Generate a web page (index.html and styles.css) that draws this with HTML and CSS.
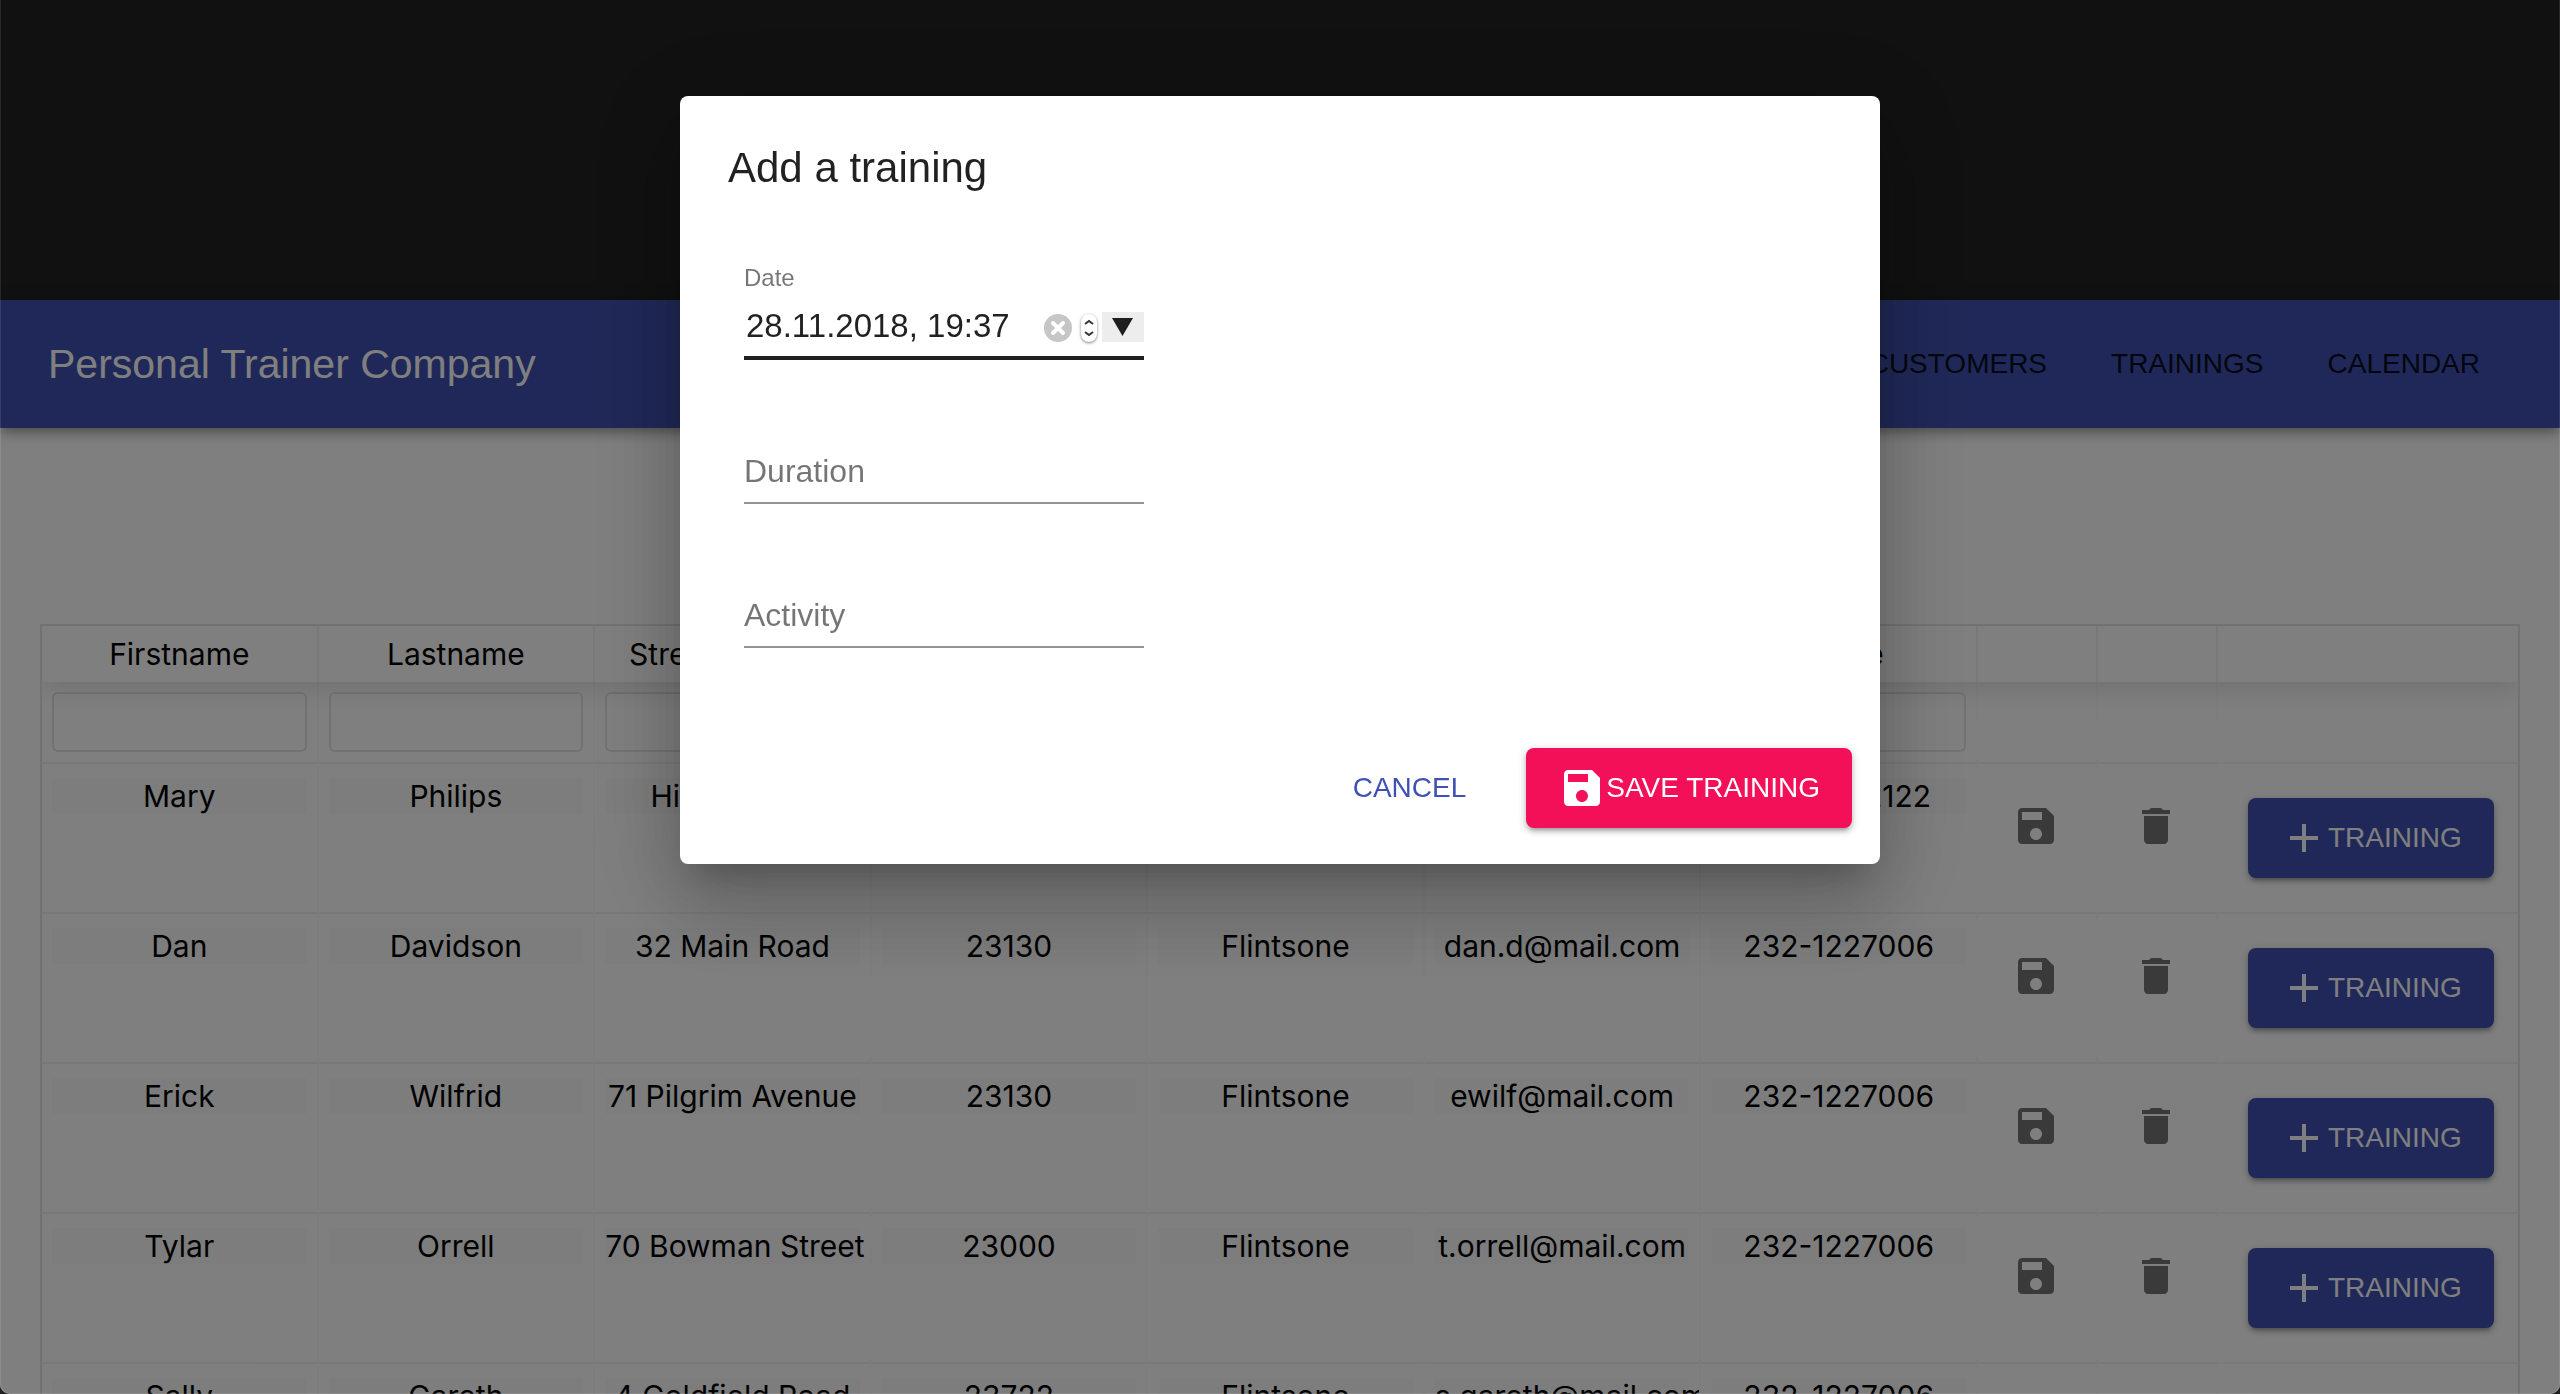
FILE: index.html
```html
<!DOCTYPE html>
<html lang="en">
<head>
<meta charset="utf-8">
<title>Personal Trainer Company</title>
<link rel="stylesheet" href="styles.css">
</head>
<body>
<svg class="sprite" aria-hidden="true">
  <symbol id="save" viewBox="0 0 24 24"><path d="M17 3H5c-1.110 0-2 .9-2 2v14c0 1.100.890 2 2 2h14c1.100 0 2-.9 2-2V7l-4-4zm-5 16c-1.660 0-3-1.340-3-3s1.340-3 3-3 3 1.340 3 3-1.340 3-3 3zm3-10H5V5h10v4z"/></symbol>
  <symbol id="delete" viewBox="0 0 24 24"><path d="M6 19c0 1.100.9 2 2 2h8c1.100 0 2-.9 2-2V7H6v12zM19 4h-3.500l-1-1h-5l-1 1H5v2h14V4z"/></symbol>
  <symbol id="add" viewBox="0 0 24 24"><path d="M19 13h-6v6h-2v-6H5v-2h6V5h2v6h6v2z"/></symbol>
</svg>
<div class="page">
  <div class="banner"></div>
  <header class="appbar">
    <h1 class="brand">Personal Trainer Company</h1>
    <nav class="nav">
      <a class="nav-link" href="#customers">CUSTOMERS</a>
      <a class="nav-link" href="#trainings">TRAININGS</a>
      <a class="nav-link" href="#calendar">CALENDAR</a>
    </nav>
  </header>
  <main class="content">
    <table class="grid">
      <colgroup><col span="7"><col class="col-icon"><col class="col-icon"><col class="col-action"></colgroup>
      <thead>
        <tr class="heads"><th>Firstname</th><th>Lastname</th><th>Street address</th><th>Postcode</th><th>City</th><th>Email</th><th>Phone</th><th></th><th></th><th></th></tr>
      </thead>
      <tbody>
        <tr class="filters">
          <td><input class="filter" type="text" aria-label="Filter firstname"></td>
          <td><input class="filter" type="text" aria-label="Filter lastname"></td>
          <td><input class="filter" type="text" aria-label="Filter street address"></td>
          <td><input class="filter" type="text" aria-label="Filter postcode"></td>
          <td><input class="filter" type="text" aria-label="Filter city"></td>
          <td><input class="filter" type="text" aria-label="Filter email"></td>
          <td><input class="filter" type="text" aria-label="Filter phone"></td>
          <td></td><td></td><td></td>
        </tr>
        <tr class="row">
          <td><div class="cell">Mary</div></td><td><div class="cell">Philips</div></td><td><div class="cell">Hill Street 2</div></td><td><div class="cell">23130</div></td><td><div class="cell">Flintsone</div></td><td><div class="cell">mary@mail.com</div></td><td><div class="cell">232-1222122</div></td>
          <td><button class="icon-button" type="button" aria-label="Save"><svg class="icon"><use href="#save"/></svg></button></td>
          <td><button class="icon-button" type="button" aria-label="Delete"><svg class="icon"><use href="#delete"/></svg></button></td>
          <td><button class="button button-primary" type="button"><svg class="icon"><use href="#add"/></svg>TRAINING</button></td>
        </tr>
        <tr class="row">
          <td><div class="cell">Dan</div></td><td><div class="cell">Davidson</div></td><td><div class="cell">32 Main Road</div></td><td><div class="cell">23130</div></td><td><div class="cell">Flintsone</div></td><td><div class="cell">dan.d@mail.com</div></td><td><div class="cell">232-1227006</div></td>
          <td><button class="icon-button" type="button" aria-label="Save"><svg class="icon"><use href="#save"/></svg></button></td>
          <td><button class="icon-button" type="button" aria-label="Delete"><svg class="icon"><use href="#delete"/></svg></button></td>
          <td><button class="button button-primary" type="button"><svg class="icon"><use href="#add"/></svg>TRAINING</button></td>
        </tr>
        <tr class="row">
          <td><div class="cell">Erick</div></td><td><div class="cell">Wilfrid</div></td><td><div class="cell">71 Pilgrim Avenue</div></td><td><div class="cell">23130</div></td><td><div class="cell">Flintsone</div></td><td><div class="cell">ewilf@mail.com</div></td><td><div class="cell">232-1227006</div></td>
          <td><button class="icon-button" type="button" aria-label="Save"><svg class="icon"><use href="#save"/></svg></button></td>
          <td><button class="icon-button" type="button" aria-label="Delete"><svg class="icon"><use href="#delete"/></svg></button></td>
          <td><button class="button button-primary" type="button"><svg class="icon"><use href="#add"/></svg>TRAINING</button></td>
        </tr>
        <tr class="row">
          <td><div class="cell">Tylar</div></td><td><div class="cell">Orrell</div></td><td><div class="cell">70 Bowman Street</div></td><td><div class="cell">23000</div></td><td><div class="cell">Flintsone</div></td><td><div class="cell">t.orrell@mail.com</div></td><td><div class="cell">232-1227006</div></td>
          <td><button class="icon-button" type="button" aria-label="Save"><svg class="icon"><use href="#save"/></svg></button></td>
          <td><button class="icon-button" type="button" aria-label="Delete"><svg class="icon"><use href="#delete"/></svg></button></td>
          <td><button class="button button-primary" type="button"><svg class="icon"><use href="#add"/></svg>TRAINING</button></td>
        </tr>
        <tr class="row">
          <td><div class="cell">Sally</div></td><td><div class="cell">Gareth</div></td><td><div class="cell">4 Goldfield Road</div></td><td><div class="cell">23722</div></td><td><div class="cell">Flintsone</div></td><td><div class="cell">s.gareth@mail.com</div></td><td><div class="cell">232-1227006</div></td>
          <td><button class="icon-button" type="button" aria-label="Save"><svg class="icon"><use href="#save"/></svg></button></td>
          <td><button class="icon-button" type="button" aria-label="Delete"><svg class="icon"><use href="#delete"/></svg></button></td>
          <td><button class="button button-primary" type="button"><svg class="icon"><use href="#add"/></svg>TRAINING</button></td>
        </tr>
      </tbody>
    </table>
  </main>
</div>
<div class="backdrop">
  <form class="dialog" role="dialog" aria-labelledby="dialog-title">
    <h2 class="dialog-title" id="dialog-title">Add a training</h2>
    <div class="fields">
      <div class="field field-active">
        <label class="label" for="date">Date</label>
        <div class="control">
          <input class="input" id="date" type="text" value="28.11.2018, 19:37">
          <button class="clear" type="button" aria-label="Clear"><svg class="glyph" viewBox="0 0 28 28"><circle cx="14" cy="14" r="14" fill="#c6c6c6"/><path d="M9 9l10 10M19 9L9 19" stroke="#fff" stroke-width="4" stroke-linecap="round"/></svg></button>
          <button class="stepper" type="button" aria-label="Step"><svg class="glyph" viewBox="0 0 16 28" fill="none" stroke="#333" stroke-width="2"><path d="M4 10l4-3 4 3M4 18l4 3 4-3"/></svg></button>
          <button class="picker" type="button" aria-label="Open calendar"><svg class="glyph" viewBox="0 0 42 30"><path d="M10 6h21L20.500 24z" fill="#1f1f1f"/></svg></button>
        </div>
      </div>
      <div class="field">
        <input class="input control" type="text" placeholder="Duration" aria-label="Duration">
      </div>
      <div class="field">
        <input class="input control" type="text" placeholder="Activity" aria-label="Activity">
      </div>
    </div>
    <div class="actions">
      <button class="button button-text" type="button">CANCEL</button>
      <button class="button button-secondary" type="submit"><svg class="icon"><use href="#save"/></svg>SAVE TRAINING</button>
    </div>
  </form>
</div>
</body>
</html>
```

FILE: styles.css
```css
* { box-sizing: border-box; }

html, body { height: 100%; }

body {
  margin: 0;
  overflow: hidden;
  background: #222;
  color: #000;
  font: 30px/36px Inter, "Liberation Sans", sans-serif;
}

h1, h2 { margin: 0; font-weight: 400; }

button, input { font: inherit; color: inherit; }
button { border: 0; padding: 0; background: none; cursor: pointer; }

.sprite { display: none; }

.page {
  height: 100%;
  overflow: hidden;
  border-radius: 0 0 10px 10px;
  background: #fff;
}

.banner { height: 300px; background: #222; }

.appbar {
  display: flex;
  align-items: center;
  justify-content: space-between;
  height: 128px;
  padding: 0 48px;
  background: #3f51b0;
  box-shadow: 0 4px 8px -2px rgba(0, 0, 0, .2), 0 8px 10px rgba(0, 0, 0, .14), 0 2px 20px rgba(0, 0, 0, .12);
  font-family: "Liberation Sans", sans-serif;
}

.brand { color: #fff; font-size: 41px; line-height: 48px; }

.nav { display: flex; }

.nav-link {
  padding: 0 32px;
  color: rgba(0, 0, 0, .87);
  font-size: 28px;
  text-decoration: none;
}

.content { padding: 196px 40px 0; }

/* Customer table */
.grid {
  width: 100%;
  border: 2px solid rgba(0, 0, 0, .1);
  border-spacing: 0;
  table-layout: fixed;
  text-align: center;
}

.col-icon { width: 120px; }
.col-action { width: 300px; }

/* The header shadow falls only downwards, inside the table frame */
.grid thead {
  box-shadow: 0 4px 30px rgba(0, 0, 0, .15);
  clip-path: inset(0 0 -60px 0);
}

.heads th {
  height: 56px;
  padding: 10px;
  border-right: 2px solid rgba(0, 0, 0, .05);
  font-weight: 400;
  overflow: hidden;
}

.grid td {
  border-right: 2px solid rgba(0, 0, 0, .02);
  border-bottom: 2px solid rgba(0, 0, 0, .05);
  overflow: hidden;
  vertical-align: top;
}

.grid th:last-child, .grid td:last-child { border-right: 0; }

.filters td { padding: 10px; }

.filter {
  display: block;
  width: 100%;
  height: 60px;
  padding: 10px 14px;
  border: 2px solid rgba(0, 0, 0, .1);
  border-radius: 6px;
  background: #fff;
}

.row td { height: 150px; padding: 14px 10px; }

.cell { height: 36px; background: #fafafa; white-space: nowrap; }

.icon { flex: none; width: 48px; height: 48px; fill: currentColor; }

.icon-button {
  display: flex;
  align-items: center;
  justify-content: center;
  width: 96px;
  height: 96px;
  color: rgba(0, 0, 0, .54);
}

/* Buttons */
.button {
  display: flex;
  align-items: center;
  height: 80px;
  padding: 0 32px;
  border-radius: 8px;
  font: 28px/48px "Liberation Sans", sans-serif;
}

.button-primary, .button-secondary {
  color: #fff;
  box-shadow: 0 2px 10px rgba(0, 0, 0, .2), 0 4px 4px rgba(0, 0, 0, .14), 0 6px 2px -4px rgba(0, 0, 0, .12);
}

.button-primary { margin: 20px; background: #3f51b0; }
.button-secondary { background: #f41059; }
.button-text { padding: 0 16px; color: #3f51b5; }

/* Dialog */
.backdrop {
  position: fixed;
  inset: 0;
  display: flex;
  align-items: flex-start;
  justify-content: center;
  padding: 96px;
  border: 1px solid rgba(255, 255, 255, .1);
  border-top: 0;
  border-radius: 0 0 10px 10px;
  background: rgba(0, 0, 0, .5);
}

.dialog {
  width: 100%;
  max-width: 1200px;
  padding-bottom: 36px;
  border-radius: 8px;
  background: #fff;
  box-shadow: 0 22px 30px -14px rgba(0, 0, 0, .2), 0 48px 76px 6px rgba(0, 0, 0, .14), 0 18px 92px 16px rgba(0, 0, 0, .12);
  color: rgba(0, 0, 0, .87);
  font-family: "Liberation Sans", sans-serif;
}

.dialog-title { padding: 48px 48px 40px; font-size: 42px; line-height: 48px; }

.fields {
  display: flex;
  flex-direction: column;
  gap: 48px;
  padding: 32px 64px 100px;
}

.field {
  display: flex;
  flex-direction: column;
  justify-content: flex-end;
  width: 400px;
  height: 96px;
}

.label { color: rgba(0, 0, 0, .54); font-size: 24px; line-height: 36px; }

.control {
  display: flex;
  flex: none;
  align-items: center;
  height: 64px;
  border-bottom: 2px solid rgba(0, 0, 0, .42);
}

.field-active .control { border-bottom: 4px solid #202020; }

.input {
  flex: 1;
  min-width: 0;
  padding: 0 2px;
  border: 0;
  outline: 0;
  background: none;
  font-size: 32px;
  line-height: 38px;
}

.field-active .input { font-size: 33px; }

.field > .input {
  flex: none;
  padding: 0;
  border-bottom: 2px solid rgba(0, 0, 0, .42);
}

.input::placeholder { color: rgba(0, 0, 0, .54); opacity: 1; }

.glyph { display: block; width: 100%; height: 100%; }

.clear { width: 28px; height: 28px; margin: 4px 9px 0 0; }

.stepper {
  width: 16px;
  height: 28px;
  margin: 4px 5px 0 0;
  border-radius: 8px;
  box-shadow: 0 1px 3px rgba(0, 0, 0, .5);
}

.picker { width: 42px; height: 30px; margin-top: 2px; background: #ededed; }

.actions {
  display: flex;
  justify-content: flex-end;
  gap: 44px;
  padding: 0 28px;
}
```
